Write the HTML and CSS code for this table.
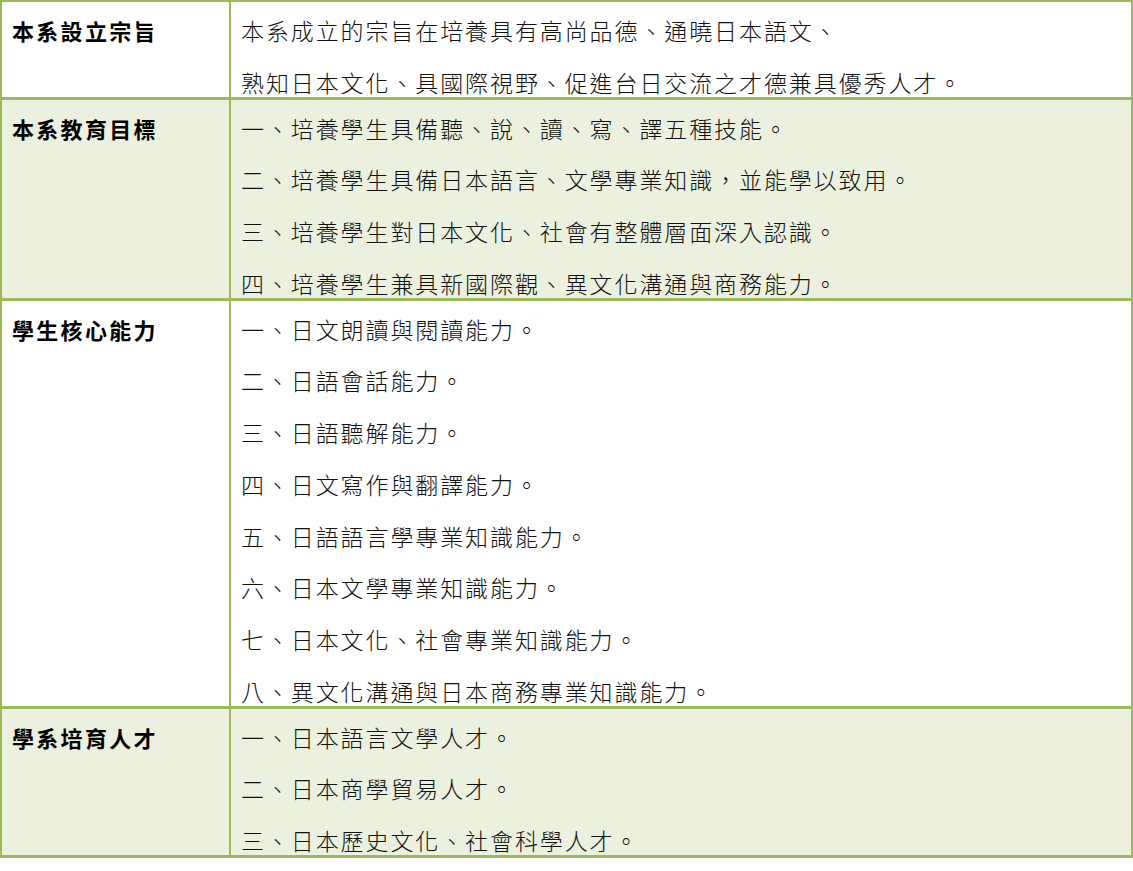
FILE: index.html
```html
<!DOCTYPE html>
<html lang="zh-Hant">
<head>
<meta charset="utf-8">
<title>日本語文學系</title>
<link rel="stylesheet" href="styles.css">
</head>
<body>
<table class="info">
  <colgroup><col class="c-head"><col class="c-body"></colgroup>
  <tbody>
    <tr class="row">
      <th class="label">本系設立宗旨</th>
      <td class="content">
        <p>本系成立的宗旨在培養具有高尚品德、通曉日本語文、</p>
        <p>熟知日本文化、具國際視野、促進台日交流之才德兼具優秀人才。</p>
      </td>
    </tr>
    <tr class="row alt">
      <th class="label">本系教育目標</th>
      <td class="content">
        <p>一、培養學生具備聽、說、讀、寫、譯五種技能。</p>
        <p>二、培養學生具備日本語言、文學專業知識，並能學以致用。</p>
        <p>三、培養學生對日本文化、社會有整體層面深入認識。</p>
        <p>四、培養學生兼具新國際觀、異文化溝通與商務能力。</p>
      </td>
    </tr>
    <tr class="row">
      <th class="label">學生核心能力</th>
      <td class="content">
        <p>一、日文朗讀與閱讀能力。</p>
        <p>二、日語會話能力。</p>
        <p>三、日語聽解能力。</p>
        <p>四、日文寫作與翻譯能力。</p>
        <p>五、日語語言學專業知識能力。</p>
        <p>六、日本文學專業知識能力。</p>
        <p>七、日本文化、社會專業知識能力。</p>
        <p>八、異文化溝通與日本商務專業知識能力。</p>
      </td>
    </tr>
    <tr class="row alt">
      <th class="label">學系培育人才</th>
      <td class="content">
        <p>一、日本語言文學人才。</p>
        <p>二、日本商學貿易人才。</p>
        <p>三、日本歷史文化、社會科學人才。</p>
      </td>
    </tr>
  </tbody>
</table>
</body>
</html>
```
FILE: styles.css
```css
html, body {
  margin: 0;
  padding: 0;
  background: #ffffff;
}

body {
  font-family: "Noto Sans CJK TC", "Noto Sans CJK SC", sans-serif;
  color: #111111;
}

.info {
  width: 1133px;
  border-collapse: collapse;
  table-layout: fixed;
  border-top: 2px solid #9bbb59;
  border-left: 2px solid #9bbb59;
  border-right: 2px solid #9bbb59;
  border-bottom: 3px solid #9bbb59;
}

.c-head { width: 229px; }
.c-body { width: auto; }

.row > th,
.row > td {
  border-top: 3px solid #9bbb59;
  vertical-align: top;
  padding: 13px 10px 0 10px;
  line-height: 30px;
  text-align: left;
}

.row:first-child > th,
.row:first-child > td {
  border-top: 2px solid #9bbb59;
}

.label {
  font-size: 22px;
  letter-spacing: 2.3px;
  font-weight: 700;
  border-right: 2px solid #9bbb59;
  color: #000000;
}

.content {
  font-size: 23px;
  letter-spacing: 1.9px;
  font-weight: 300;
}

.alt > th,
.alt > td {
  background: #ebf1de;
}

.content p {
  margin: 0 0 21.7px 0;
  white-space: nowrap;
}

.content p:last-child {
  margin-bottom: 0;
}
```
